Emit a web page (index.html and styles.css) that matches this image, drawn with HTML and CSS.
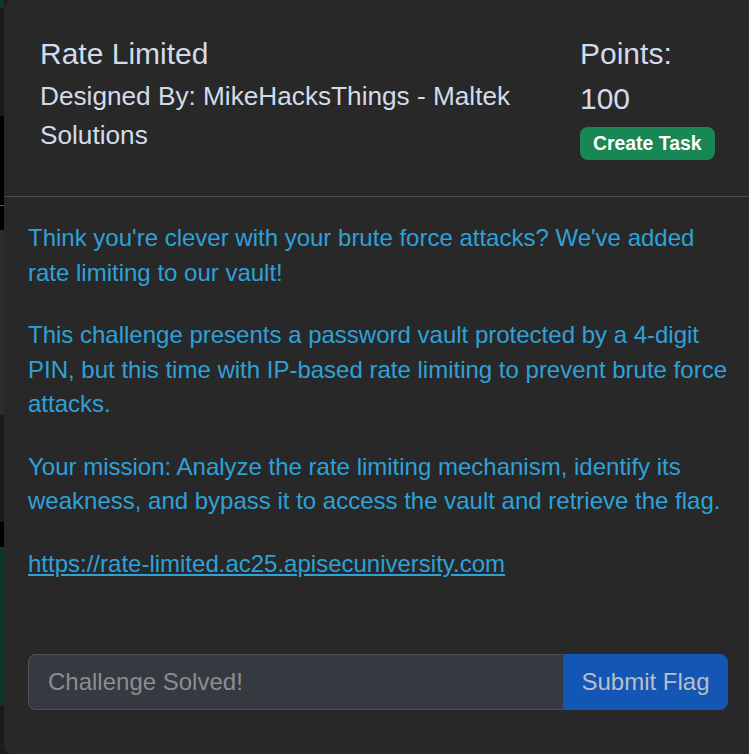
FILE: index.html
```html
<!DOCTYPE html>
<html lang="en">
<head>
<meta charset="utf-8">
<title>Rate Limited</title>
<link rel="stylesheet" href="styles.css">
</head>
<body>
<div class="page">
  <div class="backdrop">
    <div class="seg seg-green-top"></div>
    <div class="seg seg-dark-a"></div>
    <div class="seg seg-black-a"><div class="seg-line"></div></div>
    <div class="seg seg-slate"></div>
    <div class="seg seg-dark-b"></div>
    <div class="seg seg-black-b"></div>
    <div class="seg seg-green"></div>
    <div class="seg seg-dark-c"></div>
  </div>
  <div class="modal">
    <div class="modal-header">
      <div class="heading">
        <h4 class="title">Rate Limited</h4>
        <h5 class="author">Designed By: MikeHacksThings - Maltek Solutions</h5>
      </div>
      <div class="points">
        <div class="points-label">Points:</div>
        <div class="points-value">100</div>
        <span class="badge">Create Task</span>
      </div>
    </div>
    <div class="modal-body">
      <p>Think you're clever with your brute force attacks? We've added rate limiting to our vault!</p>
      <p>This challenge presents a password vault protected by a 4-digit PIN, but this time with IP-based rate limiting to prevent brute force attacks.</p>
      <p>Your mission: Analyze the rate limiting mechanism, identify its weakness, and bypass it to access the vault and retrieve the flag.</p>
      <p class="last"><a href="#">https://rate-limited.ac25.apisecuniversity.com</a></p>
    </div>
    <div class="modal-footer">
      <div class="input-group">
        <input class="flag-input" type="text" placeholder="Challenge Solved!">
        <button class="submit" type="button">Submit Flag</button>
      </div>
    </div>
  </div>
</div>
</body>
</html>
```

FILE: styles.css
```css
html, body {
  margin: 0;
  padding: 0;
  overflow: hidden;
  background: #1c1c1c;
}

body {
  font-family: "Liberation Sans", Arial, sans-serif;
  width: 749px;
  height: 754px;
}

.page {
  display: flex;
  width: 752px;
  height: 754px;
}

.backdrop {
  width: 4px;
  flex: none;
  display: flex;
  flex-direction: column;
}

.seg { width: 4px; flex: none; }
.seg-green-top { height: 8px; background: #0b3a25; }
.seg-dark-a { height: 108px; background: #1b1b1b; }
.seg-black-a { height: 114px; background: #000; display: flex; flex-direction: column; }
.seg-line { margin-top: 89px; height: 1px; background: #5a5a5a; }
.seg-slate { height: 185px; background: #2a2d31; }
.seg-dark-b { height: 107px; background: #1b1b1b; }
.seg-black-b { height: 25px; background: #000; }
.seg-green { height: 158px; background: #0b3822; }
.seg-dark-c { height: 49px; background: #1b1b1b; }

.modal {
  flex: 1;
  background: #282828;
  border-radius: 8px 0 0 8px;
  display: flex;
  flex-direction: column;
  min-width: 0;
}

.modal-header {
  display: flex;
  padding: 36px 0 36px 36px;
  border-bottom: 1px solid #4a4a4a;
  color: #d3dbea;
}

.heading {
  flex: 1;
}

.title {
  margin: 0;
  font-size: 30px;
  line-height: 35px;
  font-weight: 400;
}

.author {
  margin: 6px 0 0 0;
  font-size: 26.2px;
  line-height: 39px;
  font-weight: 400;
}

.points {
  width: 172px;
  flex: none;
  display: flex;
  flex-direction: column;
  align-items: flex-start;
}

.points-label,
.points-value {
  font-size: 30px;
  line-height: 35px;
}

.points-value {
  margin-top: 10px;
}

.badge {
  margin-top: 11px;
  background: #198754;
  color: #fff;
  font-weight: 700;
  font-size: 19.4px;
  line-height: 1;
  padding: 7px 13px 7px 13px;
  border-radius: 8px;
}

.modal-body {
  padding: 24px 24px 24px 24px;
  color: #2ea1d8;
  font-size: 24px;
  line-height: 34.5px;
}

.modal-body p {
  margin: 0 0 28px 0;
}

.modal-body p.last {
  margin-bottom: 0;
}

.modal-body a {
  color: #2ea1d8;
  text-decoration: underline;
}

.modal-footer {
  padding: 49px 24px 44px 24px;
}

.input-group {
  display: flex;
  height: 56px;
}

.flag-input {
  flex: 1;
  min-width: 0;
  box-sizing: border-box;
  height: 56px;
  margin: 0;
  padding: 0 19px;
  background: #343a40;
  border: 1px solid #4b5158;
  border-right: none;
  border-radius: 8px 0 0 8px;
  font-family: "Liberation Sans", Arial, sans-serif;
  font-size: 24px;
  color: #d3dbea;
  outline: none;
}

.flag-input::placeholder {
  color: #8b8e91;
}

.submit {
  flex: none;
  box-sizing: border-box;
  height: 56px;
  margin: 0;
  padding: 0 17.5px;
  background: #1456b3;
  border: 1px solid #1456b3;
  border-radius: 0 8px 8px 0;
  font-family: "Liberation Sans", Arial, sans-serif;
  font-size: 24px;
  color: #b8bfc8;
}
```
